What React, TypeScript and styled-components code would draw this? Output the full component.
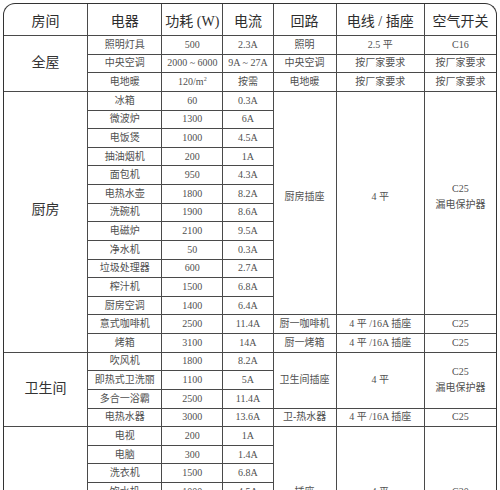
import React from 'react'
import styled, { createGlobalStyle } from 'styled-components'

interface Circuit {
  name: string
  wire: string
  breaker: string[]
  span?: number
  lift?: number
}

interface Appliance {
  name: string
  power: React.ReactNode
  current: string
  circuit?: Circuit
}

interface Room {
  name: string
  lift?: number
  items: Appliance[]
}

const GlobalStyle = createGlobalStyle`
  html, body {
    margin: 0;
    padding: 0;
    background: #fff;
    overflow: hidden;
  }
  body {
    font-family: "Liberation Serif", "Noto Sans CJK SC", serif;
  }
`

const rooms: Room[] = [
  {
    name: '全屋',
    items: [
      { name: '照明灯具', power: '500', current: '2.3A', circuit: { name: '照明', wire: '2.5 平', breaker: ['C16'] } },
      {
        name: '中央空调',
        power: '2000 ~ 6000',
        current: '9A ~ 27A',
        circuit: { name: '中央空调', wire: '按厂家要求', breaker: ['按厂家要求'] },
      },
      {
        name: '电地暖',
        power: (
          <>
            120/m<sup>2</sup>
          </>
        ),
        current: '按需',
        circuit: { name: '电地暖', wire: '按厂家要求', breaker: ['按厂家要求'] },
      },
    ],
  },
  {
    name: '厨房',
    lift: 24,
    items: [
      {
        name: '冰箱',
        power: '60',
        current: '0.3A',
        circuit: { name: '厨房插座', wire: '4 平', breaker: ['C25', '漏电保护器'], span: 12, lift: 12 },
      },
      { name: '微波炉', power: '1300', current: '6A' },
      { name: '电饭煲', power: '1000', current: '4.5A' },
      { name: '抽油烟机', power: '200', current: '1A' },
      { name: '面包机', power: '950', current: '4.3A' },
      { name: '电热水壶', power: '1800', current: '8.2A' },
      { name: '洗碗机', power: '1900', current: '8.6A' },
      { name: '电磁炉', power: '2100', current: '9.5A' },
      { name: '净水机', power: '50', current: '0.3A' },
      { name: '垃圾处理器', power: '600', current: '2.7A' },
      { name: '榨汁机', power: '1500', current: '6.8A' },
      { name: '厨房空调', power: '1400', current: '6.4A' },
      {
        name: '意式咖啡机',
        power: '2500',
        current: '11.4A',
        circuit: { name: '厨一咖啡机', wire: '4 平 /16A 插座', breaker: ['C25'] },
      },
      {
        name: '烤箱',
        power: '3100',
        current: '14A',
        circuit: { name: '厨一烤箱', wire: '4 平 /16A 插座', breaker: ['C25'] },
      },
    ],
  },
  {
    name: '卫生间',
    items: [
      {
        name: '吹风机',
        power: '1800',
        current: '8.2A',
        circuit: { name: '卫生间插座', wire: '4 平', breaker: ['C25', '漏电保护器'], span: 3 },
      },
      { name: '即热式卫洗丽', power: '1100', current: '5A' },
      { name: '多合一浴霸', power: '2500', current: '11.4A' },
      {
        name: '电热水器',
        power: '3000',
        current: '13.6A',
        circuit: { name: '卫-热水器', wire: '4 平 /16A 插座', breaker: ['C25'] },
      },
    ],
  },
  {
    name: '卧室客厅',
    items: [
      {
        name: '电视',
        power: '200',
        current: '1A',
        circuit: { name: '插座', wire: '4 平', breaker: ['C20'], span: 7 },
      },
      { name: '电脑', power: '300', current: '1.4A' },
      { name: '洗衣机', power: '1500', current: '6.8A' },
      { name: '饮水机', power: '1000', current: '4.5A' },
      { name: '电熨斗', power: '1200', current: '5.5A' },
      { name: '吸尘器', power: '800', current: '3.6A' },
      { name: '音响', power: '100', current: '0.5A' },
      {
        name: '卧室空调',
        power: '1400',
        current: '6.4A',
        circuit: { name: '空调', wire: '4 平', breaker: ['C20'] },
      },
      {
        name: '客厅空调',
        power: '2200',
        current: '10A',
        circuit: { name: '空调', wire: '4 平', breaker: ['C20'] },
      },
    ],
  },
]

const columns = [83.5, 74, 61, 50, 63, 88, 71.5]
const headers = ['房间', '电器', '功耗 (W)', '电流', '回路', '电线 / 插座', '空气开关']

export default function App() {
  return (
    <>
      <GlobalStyle />
      <Frame>
        <Table>
          <colgroup>
            {columns.map((w, i) => (
              <col key={i} style={{ width: w }} />
            ))}
          </colgroup>
          <thead>
            <HeadRow>
              {headers.map(h => (
                <HeadCell key={h}>{h}</HeadCell>
              ))}
            </HeadRow>
          </thead>
          <tbody>
            {rooms.map(room =>
              room.items.map((item, i) => (
                <Row key={room.name + item.name}>
                  {i === 0 && (
                    <RoomCell rowSpan={room.items.length} $lift={room.lift}>
                      {room.name}
                    </RoomCell>
                  )}
                  <Cell>{item.name}</Cell>
                  <Cell>{item.power}</Cell>
                  <Cell>{item.current}</Cell>
                  {item.circuit && (
                    <>
                      <Cell rowSpan={item.circuit.span} $lift={item.circuit.lift}>
                        {item.circuit.name}
                      </Cell>
                      <Cell rowSpan={item.circuit.span} $lift={item.circuit.lift}>
                        {item.circuit.wire}
                      </Cell>
                      <Cell rowSpan={item.circuit.span} $lift={item.circuit.lift}>
                        {item.circuit.breaker.map(b => (
                          <Line key={b}>{b}</Line>
                        ))}
                      </Cell>
                    </>
                  )}
                </Row>
              ))
            )}
          </tbody>
        </Table>
      </Frame>
    </>
  )
}

const Frame = styled.div`
  box-sizing: border-box;
  width: 494px;
  margin: 3px 0 0 3px;
  border: 1.5px solid #333;
  border-bottom: none;
  border-radius: 12px 12px 0 0;
  overflow: hidden;
`

const Table = styled.table`
  width: 100%;
  table-layout: fixed;
  border-collapse: collapse;
  border-style: hidden;
`

const HeadRow = styled.tr`
  height: 31.5px;
`

const HeadCell = styled.th`
  border: 1px solid #4a4a4a;
  padding: 0;
  font-size: 14px;
  font-weight: 400;
  color: #2e2e2e;
  text-align: center;
  vertical-align: middle;
  white-space: nowrap;
`

const Row = styled.tr`
  height: 18.625px;
`

const Cell = styled.td<{ $lift?: number }>`
  border: 1px solid #4a4a4a;
  padding: 0 0 ${p => p.$lift ?? 0}px;
  font-size: 10px;
  line-height: 12px;
  color: #505050;
  text-align: center;
  vertical-align: middle;
  white-space: nowrap;

  sup {
    font-size: 6px;
    line-height: 0;
  }
`

const RoomCell = styled(Cell)`
  font-size: 14px;
  line-height: 16px;
  color: #333;
`

const Line = styled.div`
  line-height: 16px;
`
